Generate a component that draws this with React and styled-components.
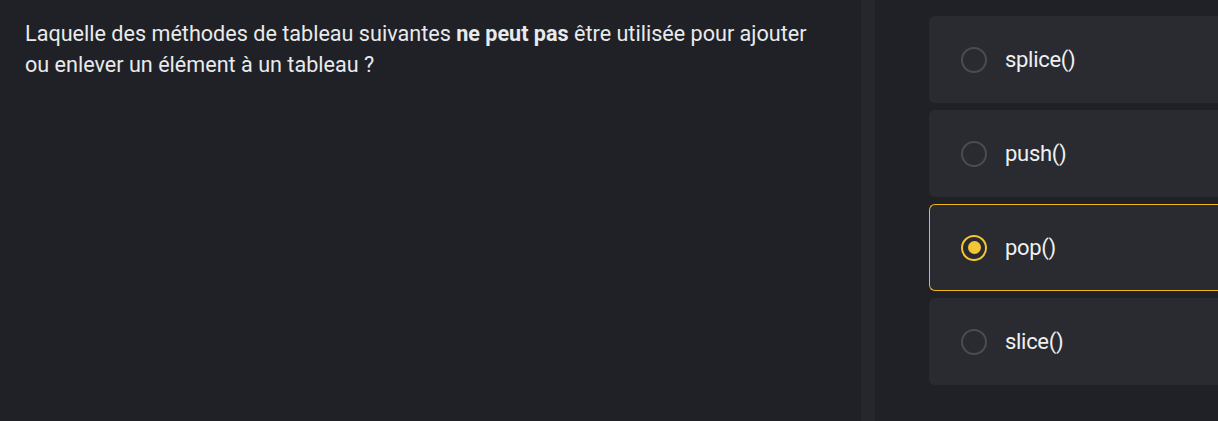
import React, { useState } from "react"
import styled, { createGlobalStyle } from "styled-components"

const Global = createGlobalStyle`
  html, body {
    margin: 0;
    padding: 0;
    background: #1f2126;
  }
  body {
    font-family: Roboto, "Noto Sans", "Liberation Sans", sans-serif;
    color: #e9eaec;
  }
`

const Page = styled.div`
  display: grid;
  grid-template-columns: 861px 14px 1fr;
  height: 421px;
  overflow: hidden;
  background: #1f2126;
`

const Question = styled.div`
  padding: 18px 25px;

  p {
    margin: 0;
    font-size: 21.6px;
    line-height: 31px;
  }

  strong {
    font-weight: 700;
  }
`

const Divider = styled.div`
  background: #25272d;
`

const Options = styled.div`
  display: flex;
  flex-direction: column;
  gap: 7px;
  padding: 16px 0 0 54px;
`

const Option = styled.label`
  display: flex;
  align-items: center;
  gap: 18px;
  height: 87px;
  box-sizing: border-box;
  width: 360px;
  padding-left: 31px;
  background: #2a2b30;
  border: 1px solid ${p => (p.$active ? "#f0b81c" : "transparent")};
  border-right: none;
  border-radius: 6px 0 0 6px;
  cursor: pointer;
  font-size: 22px;
  color: #eef0f3;
  letter-spacing: -0.3px;
`

const Radio = styled.span`
  width: 26px;
  height: 26px;
  box-sizing: border-box;
  border-radius: 50%;
  border: 2.5px solid ${p => (p.$active ? "#f5c633" : "#4b4c51")};
  display: flex;
  align-items: center;
  justify-content: center;
  flex-shrink: 0;

  &::after {
    content: "";
    width: 13px;
    height: 13px;
    border-radius: 50%;
    background: #f5c633;
    display: ${p => (p.$active ? "block" : "none")};
  }
`

const answers = ["splice()", "push()", "pop()", "slice()"]

export default function App() {
  const [picked, setPicked] = useState(2)

  return (
    <>
      <Global />
      <Page>
        <Question>
          <p>
            Laquelle des méthodes de tableau suivantes <strong>ne peut pas</strong> être utilisée pour ajouter
            <br />
            ou enlever un élément à un tableau ?
          </p>
        </Question>
        <Divider />
        <Options>
          {answers.map((a, i) => (
            <Option key={a} $active={picked === i} onClick={() => setPicked(i)}>
              <Radio $active={picked === i} />
              {a}
            </Option>
          ))}
        </Options>
      </Page>
    </>
  )
}
